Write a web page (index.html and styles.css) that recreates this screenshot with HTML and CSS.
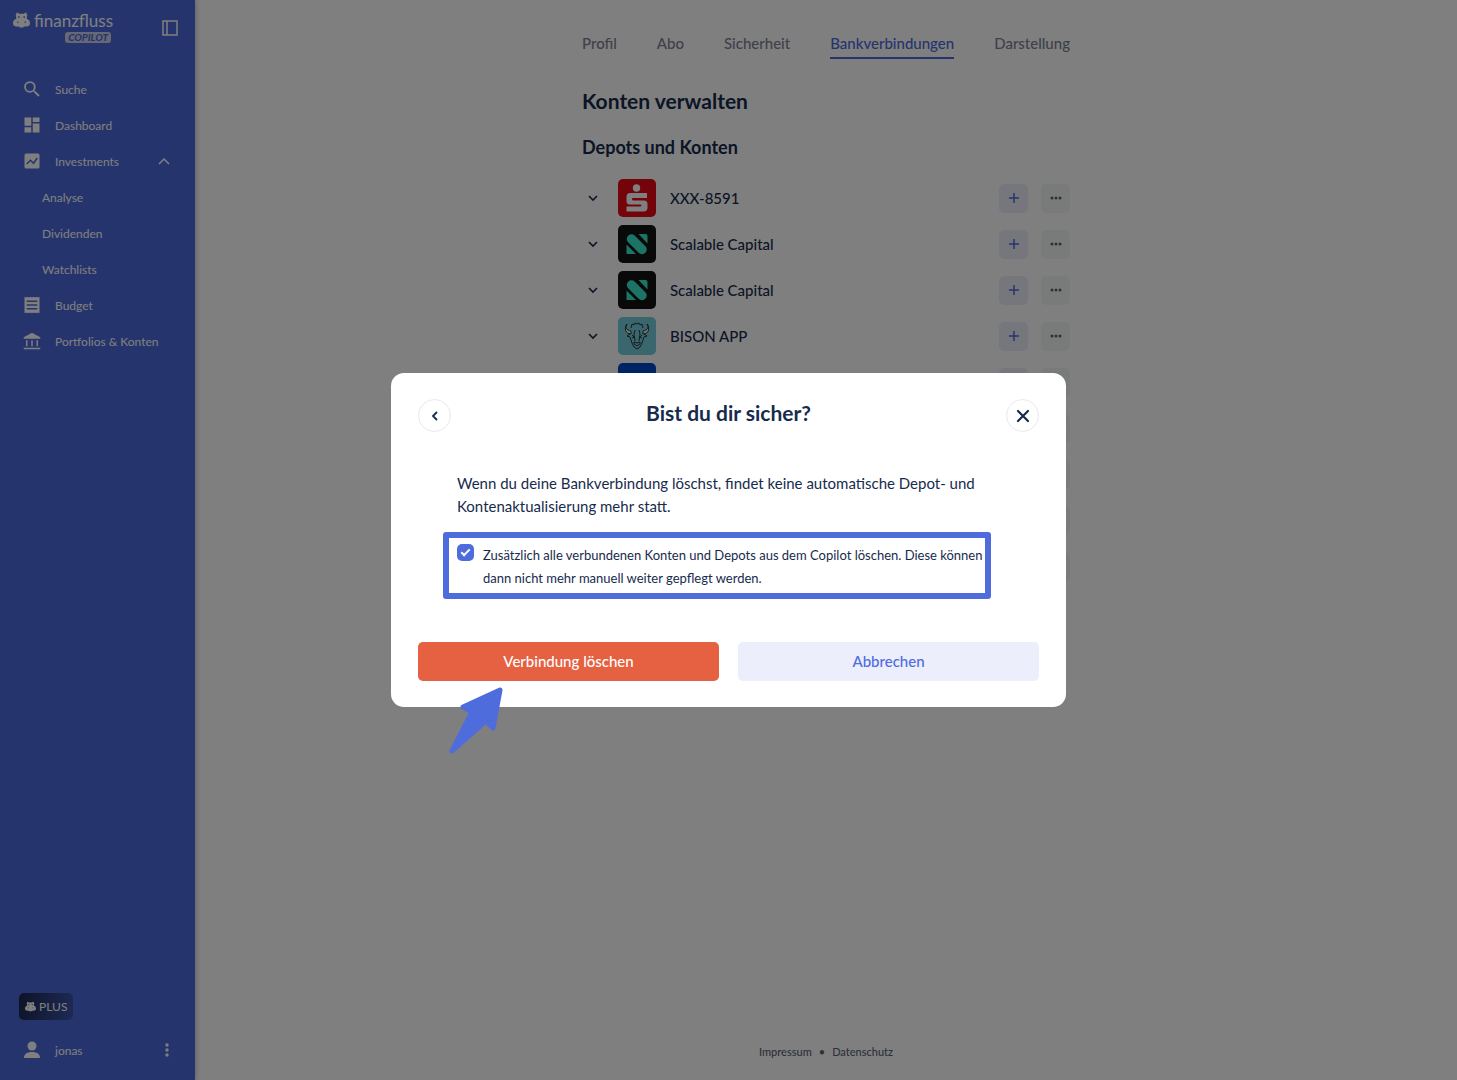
FILE: index.html
```html
<!DOCTYPE html>
<html lang="de">
<head>
  <meta charset="utf-8">
  <meta name="viewport" content="width=device-width">
  <link rel="stylesheet" href="styles.css">
  <title>Finanzfluss Copilot</title>
</head>
<body>
  <svg class="defs" aria-hidden="true">
    <symbol id="hippo" viewBox="0 0 32 30">
      <path fill-rule="evenodd" d="M6 4l1-3 3 1 1 1h10l1-1 3-1 1 3 1 2-1 3v4c4 1 6 4 6 8 0 4-3 6-7 6h-4l-2 2h-6l-2-2H7c-4 0-7-2-7-6 0-4 2-7 6-8V9L5 6zM11 8a1.500 1.500 0 1 0 .1 0zM21 8a1.500 1.500 0 1 0 .1 0zM9 18a1.500 1 0 1 0 .1 0zM23 18a1.500 1 0 1 0 .1 0z"/>
    </symbol>
    <symbol id="down" viewBox="0 0 12 12">
      <path d="M2 4l4 4 4-4" fill="none" stroke="currentColor" stroke-width="1.6"/>
    </symbol>
    <symbol id="plus" viewBox="0 0 12 12">
      <path d="M6 1v10M1 6h10" fill="none" stroke="currentColor" stroke-width="1.5"/>
    </symbol>
    <symbol id="dots" viewBox="0 0 12 12">
      <circle cx="2" cy="6" r="1.5"/><circle cx="6" cy="6" r="1.5"/><circle cx="10" cy="6" r="1.5"/>
    </symbol>
    <symbol id="scalable" viewBox="0 0 38 38">
      <rect width="38" height="38" fill="#121212"/>
      <path d="M13.500 14l10.500 10.500" stroke="#36e9cd" stroke-width="9.500" stroke-linecap="round"/>
      <path d="M20.500 9h7q2 0 2 2v7.500zM8.500 19.500v9.500h9.500z" fill="#36e9cd"/>
    </symbol>
  </svg>

  <div class="app">
    <aside class="sidebar">
      <header class="brand">
        <svg class="brand-icon" width="17" height="16"><use href="#hippo"/></svg>
        <div class="brand-name">
          <span>finanzfluss</span>
          <span class="copilot">COPILOT</span>
        </div>
        <button class="plain toggle" type="button" aria-label="Menü einklappen">
          <svg width="16" height="16" viewBox="0 0 16 16"><path d="M1 1h14v14H1zM5 1v14" fill="none" stroke="currentColor" stroke-width="1.5"/></svg>
        </button>
      </header>

      <nav class="menu">
        <a href="#"><svg width="18" height="18" viewBox="0 0 24 24"><path d="M15.500 14h-.79l-.28-.27A6.470 6.470 0 0 0 16 9.500 6.500 6.500 0 1 0 9.500 16c1.610 0 3.090-.59 4.230-1.570l.27.28v.79l5 4.990L20.490 19l-4.990-5zm-6 0a4.500 4.500 0 1 1 0-9 4.500 4.500 0 0 1 0 9z" transform="translate(-2 -2) scale(1.18)"/></svg>Suche</a>
        <a href="#"><svg width="18" height="18" viewBox="0 0 24 24"><path d="M2 2h9v11H2zM13 2h9v6h-9zM2 15h9v7H2zM13 10h9v12h-9z"/></svg>Dashboard</a>
        <a href="#"><svg width="18" height="18" viewBox="0 0 24 24"><rect x="2" y="2" width="20" height="20" rx="2"/><path d="M5 16l5-5 4 4 5-7" fill="none" stroke="#4d69dc" stroke-width="2"/></svg>Investments
          <svg class="up" width="12" height="12" viewBox="0 0 12 12"><path d="M1 9l5-5 5 5" fill="none" stroke="currentColor" stroke-width="1.500"/></svg></a>
        <a class="sub" href="#">Analyse</a>
        <a class="sub" href="#">Dividenden</a>
        <a class="sub" href="#">Watchlists</a>
        <a href="#"><svg width="18" height="18" viewBox="0 0 24 24"><path fill-rule="evenodd" d="M2 1l2 1 2-1 2 1 2-1 2 1 2-1 2 1 2-1 2 1 2-1v22l-2-1-2 1-2-1-2 1-2-1-2 1-2-1-2 1-2-1-2 1zM5 6v2h14V6zM5 11v2h14v-2zM5 16v2h14v-2z"/></svg>Budget</a>
        <a href="#"><svg width="18" height="18" viewBox="0 0 24 24"><path d="M12 1l11 6v2H1V7zM4 11h2v8H4zM11 11h2v8h-2zM18 11h2v8h-2zM1 21h22v2H1z"/></svg>Portfolios &amp; Konten</a>
      </nav>

      <div class="account">
        <span class="plus-badge"><svg width="11" height="11"><use href="#hippo"/></svg>PLUS</span>
        <div class="user">
          <svg width="16" height="18" viewBox="0 0 16 18"><circle cx="8" cy="5" r="4.500"/><path d="M0 17c0-4 3-6 8-6s8 2 8 6z"/></svg>
          <span>jonas</span>
          <button class="plain" type="button" aria-label="Konto-Menü">
            <svg width="4" height="14" viewBox="0 0 4 14"><circle cx="2" cy="2" r="1.700"/><circle cx="2" cy="7" r="1.700"/><circle cx="2" cy="12" r="1.700"/></svg>
          </button>
        </div>
      </div>
    </aside>

    <div class="page">
      <main class="content">
        <nav class="tabs">
          <a href="#">Profil</a>
          <a href="#">Abo</a>
          <a href="#">Sicherheit</a>
          <a href="#" class="active">Bankverbindungen</a>
          <a href="#">Darstellung</a>
        </nav>
        <h1>Konten verwalten</h1>
        <h2>Depots und Konten</h2>
        <ul class="banks">
          <li>
            <svg class="arrow" width="12" height="12"><use href="#down"/></svg>
            <svg class="logo" viewBox="0 0 38 38"><rect width="38" height="38" fill="#e60a14"/><circle cx="18.500" cy="9" r="3.700" fill="#fff"/><path d="M12 14h17v5H15q-1 0-1 1t1 1.500h11q3.500 0 3.500 3.500v3.500q0 4-4 4H8.500V27.500H22q1.500 0 1.500-1t-1.500-1H12q-3.500 0-3.500-3.500v-4q0-4 3.500-4z" fill="#fff"/></svg>
            <span>XXX-8591</span>
            <button class="add" type="button" aria-label="Hinzufügen"><svg width="12" height="12"><use href="#plus"/></svg></button>
            <button class="more" type="button" aria-label="Mehr"><svg width="12" height="12"><use href="#dots"/></svg></button>
          </li>
          <li>
            <svg class="arrow" width="12" height="12"><use href="#down"/></svg>
            <svg class="logo"><use href="#scalable"/></svg>
            <span>Scalable Capital</span>
            <button class="add" type="button" aria-label="Hinzufügen"><svg width="12" height="12"><use href="#plus"/></svg></button>
            <button class="more" type="button" aria-label="Mehr"><svg width="12" height="12"><use href="#dots"/></svg></button>
          </li>
          <li>
            <svg class="arrow" width="12" height="12"><use href="#down"/></svg>
            <svg class="logo"><use href="#scalable"/></svg>
            <span>Scalable Capital</span>
            <button class="add" type="button" aria-label="Hinzufügen"><svg width="12" height="12"><use href="#plus"/></svg></button>
            <button class="more" type="button" aria-label="Mehr"><svg width="12" height="12"><use href="#dots"/></svg></button>
          </li>
          <li>
            <svg class="arrow" width="12" height="12"><use href="#down"/></svg>
            <svg class="logo" viewBox="0 0 38 38"><rect width="38" height="38" fill="#74ccdc"/><g fill="none" stroke="#1c2428" stroke-width=".9" stroke-linejoin="round"><path d="M13 14c-5-1-6-4-4-7-3 4-2 10 4 10zM25 14c5-1 6-4 4-7 3 4 2 10-4 10z" fill="#f3e8e4"/><path d="M13 11l1-4 2 1 1-2 2 1 2-1 1 2 2-1 1 4M12 17l-3 2 3 1 2 6 2 4 3 2 3-2 2-4 2-6 3-1-3-2M14 18l2 2-2 1M24 18l-2 2 2 1M17 13l-1 4 1 7M21 13l1 4-1 7M16 25v2l3 2 3-2v-2l-3 1z"/></g></svg>
            <span>BISON APP</span>
            <button class="add" type="button" aria-label="Hinzufügen"><svg width="12" height="12"><use href="#plus"/></svg></button>
            <button class="more" type="button" aria-label="Mehr"><svg width="12" height="12"><use href="#dots"/></svg></button>
          </li>
          <li>
            <svg class="arrow" width="12" height="12"><use href="#down"/></svg>
            <svg class="logo" viewBox="0 0 38 38"><rect width="38" height="38" fill="#0046c8"/></svg>
            <span></span>
            <button class="add" type="button" aria-label="Hinzufügen"><svg width="12" height="12"><use href="#plus"/></svg></button>
            <button class="more" type="button" aria-label="Mehr"><svg width="12" height="12"><use href="#dots"/></svg></button>
          </li>
          <li><button class="more" type="button" aria-label="Mehr"></button></li>
          <li><button class="more" type="button" aria-label="Mehr"></button></li>
          <li><button class="more" type="button" aria-label="Mehr"></button></li>
          <li><button class="more" type="button" aria-label="Mehr"></button></li>
        </ul>
      </main>
      <footer class="footer">
        <a href="#">Impressum</a><span>•</span><a href="#">Datenschutz</a>
      </footer>
    </div>
  </div>

  <div class="overlay">
    <dialog class="modal" open aria-labelledby="modal-title">
      <header class="modal-head">
        <button class="round" type="button" aria-label="Zurück">
          <svg width="12" height="12" viewBox="0 0 12 12"><path d="M8 2L4 6l4 4" fill="none" stroke="currentColor" stroke-width="1.800"/></svg>
        </button>
        <h2 id="modal-title">Bist du dir sicher?</h2>
        <button class="round" type="button" aria-label="Schließen">
          <svg width="14" height="14" viewBox="0 0 14 14"><path d="M2 2l10 10M12 2L2 12" fill="none" stroke="currentColor" stroke-width="2.200" stroke-linecap="round"/></svg>
        </button>
      </header>
      <p>Wenn du deine Bankverbindung löschst, findet keine automatische Depot- und Kontenaktualisierung mehr statt.</p>
      <div class="highlight">
        <input type="checkbox" id="delete-all" checked>
        <label for="delete-all">Zusätzlich alle verbundenen Konten und Depots aus dem Copilot löschen. Diese können dann nicht mehr manuell weiter gepflegt werden.</label>
      </div>
      <div class="actions">
        <button class="danger" type="button">Verbindung löschen</button>
        <button class="cancel" type="button">Abbrechen</button>
      </div>
      <svg class="pointer" width="56" height="70" viewBox="0 0 56 70"><path d="M51 5L14 22l9 5L3 66l34-30 7 7z" fill="#4f6cdd" stroke="#4f6cdd" stroke-width="5" stroke-linejoin="round"/></svg>
    </dialog>
  </div>
</body>
</html>
```

FILE: styles.css
```css
* {
  box-sizing: border-box;
}
body {
  margin: 0;
  font-family: Lato, "Liberation Sans", sans-serif;
  font-size: 15px;
  color: #172b4d;
  background-color: #ffffff;
}
a {
  color: inherit;
  text-decoration: none;
}
button {
  font-family: inherit;
  border: 0;
  padding: 0;
  color: inherit;
  cursor: pointer;
}
svg {
  display: block;
  fill: currentColor;
}
.defs {
  display: none;
}
.plain {
  background: none;
}
.app {
  display: flex;
  min-height: 100vh;
}

/* Sidebar */
.sidebar {
  display: flex;
  flex-direction: column;
  width: 195px;
  flex-shrink: 0;
  background-color: #4d69dc;
  color: #ffffff;
  font-size: 12px;
  box-shadow: 0 0 6px rgba(0, 0, 0, 0.3);
}
.brand {
  display: flex;
  align-items: flex-start;
  gap: 4px;
  height: 72px;
  padding: 12px 17px 0 13px;
}
.brand-name {
  display: flex;
  flex-direction: column;
  align-items: flex-end;
  font-size: 17px;
  line-height: 18px;
}
.copilot {
  margin: 2px 2px 0 0;
  padding: 0 3px;
  border-radius: 3px;
  background-color: #cdd3ea;
  color: #4d69dc;
  font-size: 10px;
  font-weight: 900;
  font-style: italic;
  line-height: 11px;
}
.toggle {
  margin: 8px 0 0 auto;
}
.menu a {
  display: flex;
  align-items: center;
  gap: 14px;
  height: 36px;
  padding: 0 25px 2px 23px;
}
.menu .sub {
  padding-left: 42px;
}
.up {
  margin-left: auto;
}
.account {
  margin-top: auto;
  padding: 0 24px 18px 19px;
}
.plus-badge {
  display: inline-flex;
  align-items: center;
  gap: 3px;
  height: 27px;
  padding: 0 6px;
  border-radius: 5px;
  background: linear-gradient(100deg, #1c264f, #3c55ac);
}
.user {
  display: flex;
  align-items: center;
  gap: 15px;
  height: 24px;
  margin-top: 18px;
  padding-left: 5px;
}
.user .plain {
  margin-left: auto;
  padding-right: 2px;
}

/* Page */
.page {
  display: flex;
  flex-direction: column;
  align-items: center;
  flex: 1;
}
.content {
  width: 100%;
  max-width: 488px;
  padding-top: 32px;
}
.tabs {
  display: flex;
  justify-content: space-between;
  line-height: 23px;
  font-weight: 500;
  color: #7c8293;
}
.tabs a {
  padding-bottom: 2px;
  border-bottom: 2px solid transparent;
}
.tabs .active {
  color: #4d69dc;
  border-color: #4d69dc;
}
h1, h2 {
  margin: 0;
  font-weight: 700;
}
h1 {
  margin-top: 28px;
  font-size: 21px;
  line-height: 28px;
}
.content h2 {
  margin-top: 20px;
  font-size: 18px;
  line-height: 24px;
}
.banks {
  display: flex;
  flex-direction: column;
  gap: 8px;
  margin: 20px 0 0;
  padding: 0;
  list-style: none;
  font-weight: 500;
}
.banks li {
  display: flex;
  align-items: center;
  height: 38px;
  padding-left: 5px;
}
.logo {
  width: 38px;
  height: 38px;
  margin: 0 14px 0 19px;
  border-radius: 5px;
}
.add, .more {
  display: flex;
  align-items: center;
  justify-content: center;
  width: 29px;
  height: 29px;
  margin-left: auto;
  border-radius: 5px;
}
.add {
  background-color: #edeffb;
  color: #4d69dc;
}
.add + .more {
  margin-left: 13px;
}
.more {
  background-color: #f3f7f6;
  color: #5b6077;
}
.footer {
  display: flex;
  gap: 7px;
  margin-top: auto;
  padding-bottom: 20px;
  font-size: 11px;
  font-weight: 500;
  line-height: 16px;
  color: #5b6375;
}

/* Dialog */
.overlay {
  position: fixed;
  inset: 0;
  display: flex;
  align-items: center;
  justify-content: center;
  background-color: rgba(0, 0, 0, 0.5);
}
.modal {
  position: relative;
  width: 100%;
  max-width: 675px;
  margin: 0;
  padding: 26px 27px;
  border: 0;
  border-radius: 13px;
  background-color: #ffffff;
  color: #172b4d;
}
.modal-head {
  display: flex;
  justify-content: space-between;
}
.modal-head h2 {
  font-size: 21px;
  line-height: 28px;
}
.round {
  display: flex;
  align-items: center;
  justify-content: center;
  width: 33px;
  height: 33px;
  border: 1px solid #e8e9ed;
  border-radius: 50%;
  background-color: #ffffff;
}
.modal p {
  margin: 40px 39px 14px;
  line-height: 23px;
}
.highlight {
  display: flex;
  gap: 9px;
  margin: 0 48px 0 25px;
  padding: 6px 0 3px 8px;
  border: 6px solid #4f6cdd;
  border-radius: 3px;
  font-size: 13px;
  line-height: 23px;
}
.highlight input {
  appearance: none;
  display: flex;
  justify-content: center;
  flex-shrink: 0;
  width: 17px;
  height: 17px;
  margin: 0;
  border-radius: 5px;
  background-color: #4f6cdd;
}
.highlight input:checked::after {
  content: "";
  width: 3px;
  height: 7px;
  margin-top: 3px;
  border: solid #ffffff;
  border-width: 0 2px 2px 0;
  transform: rotate(45deg);
}
.actions {
  display: flex;
  gap: 19px;
  margin-top: 43px;
}
.actions button {
  flex: 1;
  height: 39px;
  padding-bottom: 2px;
  border-radius: 5px;
  font-size: 15px;
  font-weight: 500;
}
.danger {
  background-color: #e66042;
  color: #ffffff;
}
.cancel {
  background-color: #eceefb;
  color: #4f6cdd;
}
.pointer {
  position: absolute;
  left: 58px;
  top: 312px;
}
```
